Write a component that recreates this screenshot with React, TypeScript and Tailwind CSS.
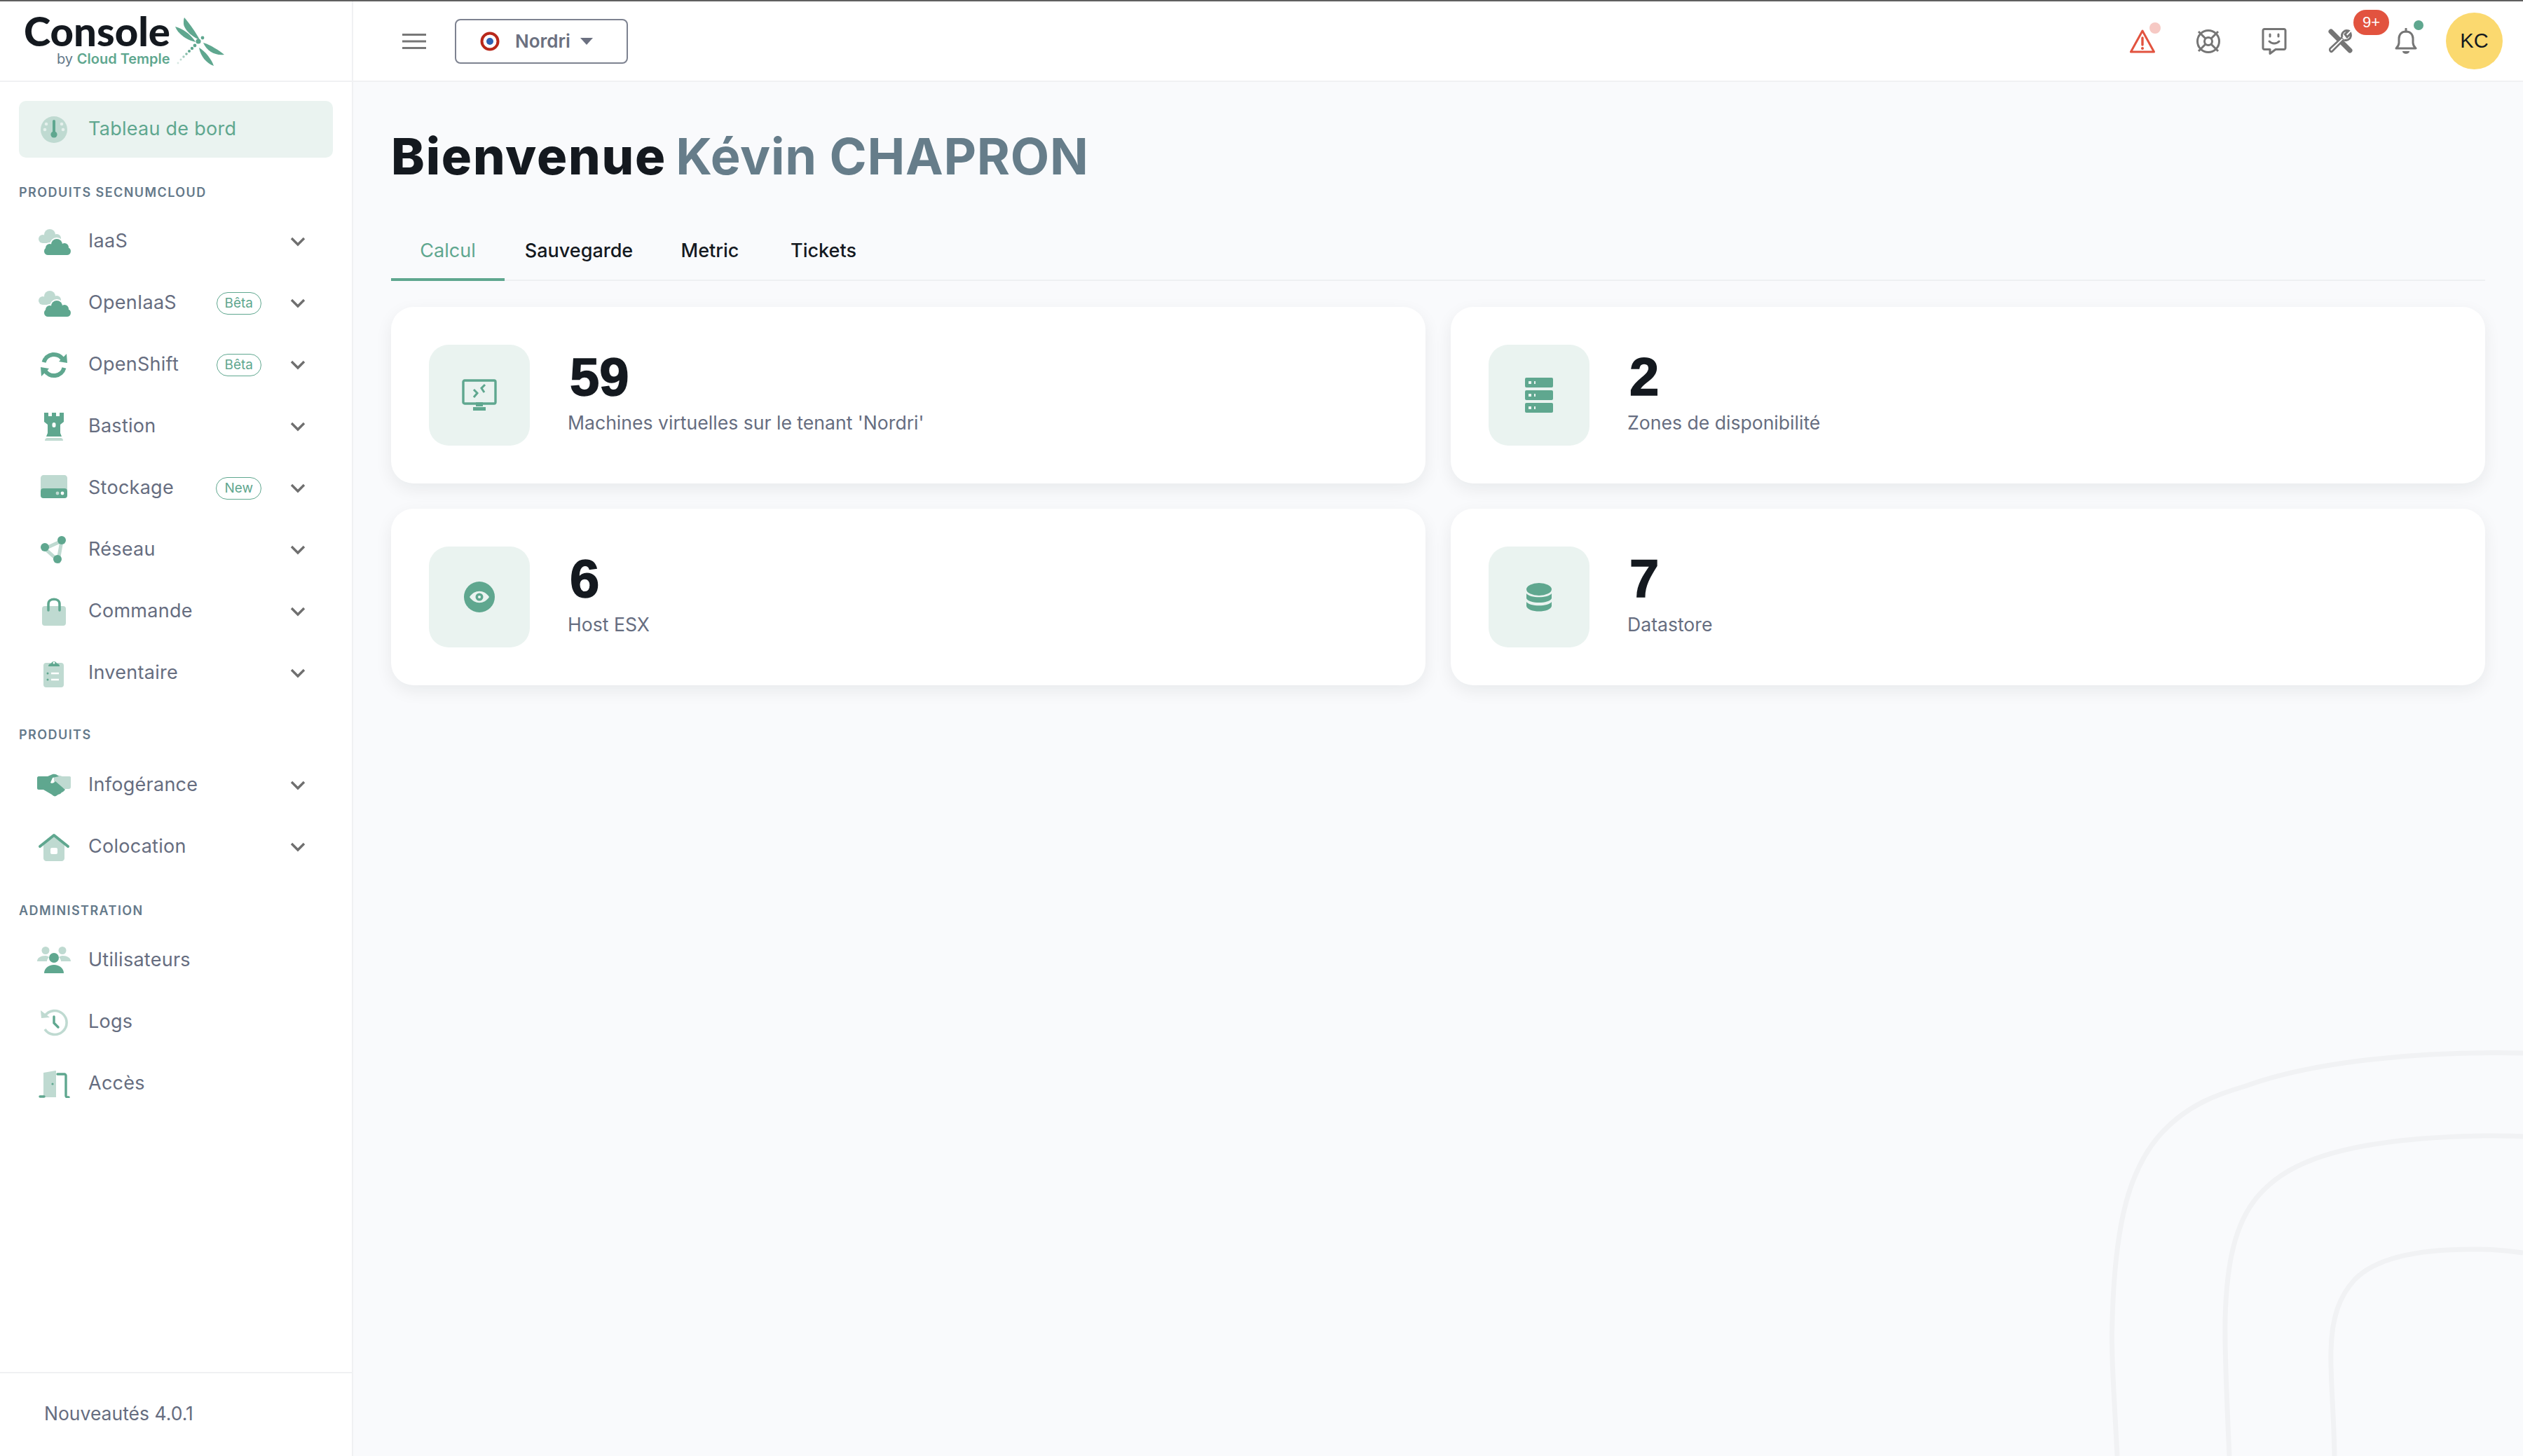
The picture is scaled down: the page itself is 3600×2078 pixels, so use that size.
import type { ReactNode } from "react";

const G = "#5fa78f";
const L = "#bfdad1";

function Chevron() {
  return (
    <svg width="24" height="16" viewBox="0 0 24 16" fill="none" className="shrink-0">
      <path d="M3 3l9 9 9-9" stroke="#6f6f6f" strokeWidth="3.4" />
    </svg>
  );
}

function Ic({ children }: { children: ReactNode }) {
  return (
    <svg width="48" height="40" viewBox="0 0 48 40" fill="none" className="shrink-0">
      {children}
    </svg>
  );
}

const Cloud = (
  <Ic>
    <circle cx="18" cy="10" r="8" fill={L} />
    <circle cx="8" cy="16" r="6" fill={L} />
    <circle cx="28" cy="15" r="6" fill={L} />
    <rect x="8" y="14" width="20" height="8" fill={L} />
    <g fill="#fff" stroke="#fff" strokeWidth="4">
      <circle cx="28" cy="24" r="8" />
      <circle cx="39" cy="28" r="6" />
      <circle cx="18" cy="29" r="6" />
      <rect x="10" y="28" width="37" height="11" rx="5.5" />
    </g>
    <g fill={G}>
      <circle cx="28" cy="24" r="8" />
      <circle cx="39" cy="28" r="6" />
      <circle cx="18" cy="29" r="6" />
      <rect x="10" y="28" width="38" height="11" rx="5.5" />
    </g>
  </Ic>
);

const icons: Record<string, ReactNode> = {
  dash: (
    <Ic>
      <circle cx="24" cy="20" r="19" fill={L} />
      <rect x="22" y="6" width="4" height="20" rx="2" fill={G} />
      <circle cx="24" cy="27" r="4.6" fill={G} />
      <circle cx="13" cy="12" r="2.3" fill="#e5f0ec" />
      <circle cx="35" cy="12" r="2.3" fill="#e5f0ec" />
      <circle cx="11" cy="20" r="2.3" fill="#e5f0ec" />
      <circle cx="37" cy="20" r="2.3" fill="#e5f0ec" />
    </Ic>
  ),
  cloud: Cloud,
  shift: (
    <Ic>
      <path d="M9.5 16A15 15 0 0 1 37 12.5" stroke={G} strokeWidth="6" />
      <path d="M38.5 24A15 15 0 0 1 11 27.5" stroke={G} strokeWidth="6" />
      <path d="M42 4l1 13-12-2zM6 36L5 23l12 2z" fill={G} />
    </Ic>
  ),
  tower: (
    <Ic>
      <path d="M10 0h6v5h5V0h6v5h5V0h6v13l-5 4v12l2 5H13l2-5V17l-5-4z" fill={G} />
      <rect x="21.5" y="14" width="5" height="7" rx="2.5" fill="#fff" />
      <path d="M11 40c0-3 2-4 3-4h20c1 0 3 1 3 4z" fill={L} />
    </Ic>
  ),
  disk: (
    <Ic>
      <path d="M5 22V5c0-2 2-4 4-4h30c2 0 4 2 4 4v17z" fill={L} />
      <rect x="5" y="20" width="38" height="14" rx="4" fill={G} />
      <circle cx="29" cy="27" r="2.4" fill={L} />
      <circle cx="36" cy="27" r="2.4" fill="#fff" />
    </Ic>
  ),
  net: (
    <Ic>
      <path d="M11 18l24-11-5 28z" stroke={L} strokeWidth="5" />
      <circle cx="11" cy="16" r="6" fill={G} />
      <circle cx="35" cy="6" r="6" fill={G} />
      <circle cx="29" cy="33" r="6" fill={G} />
    </Ic>
  ),
  bag: (
    <Ic>
      <rect x="7" y="12" width="34" height="28" rx="4" fill={L} />
      <path d="M16 18V9c0-9 16-9 16 0v9" stroke={G} strokeWidth="3.5" strokeLinecap="round" />
    </Ic>
  ),
  clip: (
    <Ic>
      <rect x="9" y="5" width="29" height="35" rx="4" fill={L} />
      <path d="M16 10c0-3 2-4 4-4 1-4 7-4 8 0 2 0 4 1 4 4z" fill={G} />
      <circle cx="24" cy="5" r="1.5" fill="#fff" />
      <path d="M20 20h11M20 29h11" stroke="#fff" strokeWidth="2.4" />
      <circle cx="15" cy="20" r="1.5" fill={G} />
      <circle cx="15" cy="29" r="1.5" fill={G} />
    </Ic>
  ),
  hands: (
    <Ic>
      <path d="M24 7c6-3 8-1 12 0h10c2 0 2 1 2 2v13c0 2-1 3-3 3h-6L24 14z" fill={L} />
      <path d="M0 9c0-1 1-2 2-2h13l7-3c3-1 6 0 9 3l-9 2-3 7c3 2 5 0 7-2l14 12-3 3-2 1-2 2-3 1-3 2c-2 1-4 0-6-2L9 26H2c-1 0-2-1-2-2z" fill={G} />
    </Ic>
  ),
  house: (
    <Ic>
      <path d="M9 14L24 5l15 9v22c0 2-2 4-4 4H13c-2 0-4-2-4-4z" fill={L} />
      <path d="M4 19L24 3l20 16" stroke={G} strokeWidth="4" strokeLinecap="round" strokeLinejoin="round" />
      <rect x="19" y="21" width="10" height="9" rx="2" fill="#fff" />
    </Ic>
  ),
  users: (
    <Ic>
      <circle cx="12" cy="5.5" r="5.5" fill={L} />
      <circle cx="36" cy="5.5" r="5.5" fill={L} />
      <path d="M0 21c0-5 5-8 12-8 2 0 4 1 5 2-2 2-3 4-3 6zM48 21c0-5-5-8-12-8-2 0-4 1-5 2 2 2 3 4 3 6z" fill={L} />
      <circle cx="24" cy="16" r="7" fill={G} />
      <path d="M10 38c0-7 6-12 14-12s14 5 14 12z" fill={G} />
    </Ic>
  ),
  logs: (
    <Ic>
      <path d="M11 11A17 17 0 1 1 11 30" stroke={L} strokeWidth="3.6" />
      <path d="M5 3l1 11 12-1z" fill={L} />
      <path d="M24 12v9l6 6" stroke={G} strokeWidth="3.4" strokeLinecap="round" />
    </Ic>
  ),
  door: (
    <Ic>
      <path d="M9 4l17-3c1 0 1 0 1 1v37H9z" fill={L} />
      <path d="M29 6h10c1 0 2 1 2 2v29c0 1 1 2 2 2h2M4 38h6" stroke={G} strokeWidth="3.4" strokeLinecap="round" />
      <circle cx="22" cy="20" r="1.6" fill={G} />
    </Ic>
  ),
};

function Tag({ label }: { label: string }) {
  return (
    <span className="flex h-[32px] items-center rounded-full border border-[#5fa78f] bg-white px-[11px] text-[19px] text-[#5fa78f]">
      {label}
    </span>
  );
}

function NavItem({ icon, label, tag, arrow = true }: { icon: string; label: string; tag?: string; arrow?: boolean }) {
  return (
    <div className="flex h-[88px] items-center pl-[53px] pr-[65px]">
      {icons[icon]}
      <span className="ml-[25px] -mt-[1px] text-[27px] tracking-[0.01em] text-[#666d80]">{label}</span>
      <span className="ml-auto flex items-center gap-[40px]">
        {tag && <Tag label={tag} />}
        {arrow && <Chevron />}
      </span>
    </div>
  );
}

function Sidebar() {
  return (
    <aside className="flex w-[504px] shrink-0 flex-col border-r-2 border-[#f0f1f3] bg-white">
      <div className="relative h-[115px] shrink-0 border-b-2 border-[#f0f1f3]">
        <div className="absolute left-[34px] top-[17px] font-['Lato'] text-[58px] font-black leading-[50px] text-[#14191f]">
          Console
        </div>
        <div className="absolute left-[81px] top-[71px] text-[20px] leading-[22px] text-[#64798a]">
          by <span className="font-semibold text-[#5fa78f]">Cloud Temple</span>
        </div>
        <svg className="absolute left-[248px] top-[21px]" width="74" height="74" viewBox="0 0 74 74" fill="none">
          <path d="M15 2C22 10 32 24 37 34C27 30 15 20 14 11C14 7 14 4 15 2z" fill={G} />
          <path d="M2 15C14 18 26 28 31 37C20 35 7 27 2 15z" fill={G} />
          <path d="M42 38C52 41 65 49 72 55C60 57 47 50 42 38z" fill={G} />
          <path d="M36 45C45 50 54 62 57 71C47 68 38 57 36 45z" fill={G} />
          <circle cx="41" cy="31" r="2.4" fill={G} />
          <circle cx="35" cy="36" r="3.6" fill={G} />
          <circle cx="30" cy="42" r="2.4" fill={G} />
          <circle cx="26" cy="46" r="2.2" fill={G} />
          <circle cx="22" cy="50" r="2" fill={G} />
          <circle cx="18" cy="54" r="1.8" fill="#85bca9" />
          <circle cx="14" cy="58" r="1.7" fill="#a2cdbf" />
          <circle cx="10" cy="62" r="1.5" fill={L} />
          <circle cx="6" cy="67" r="1.4" fill="#d7e8e2" />
        </svg>
      </div>

      <div className="mx-[27px] mt-[27px] flex h-[81px] items-center rounded-[10px] bg-[#eaf3f0] pl-[26px]">
        {icons.dash}
        <span className="ml-[25px] -mt-[1px] text-[27px] tracking-[0.01em] text-[#5fa78f]">Tableau de bord</span>
      </div>

      <SectionLabel className="mb-[16px] mt-[40px]">Produits SecNumCloud</SectionLabel>
      <NavItem icon="cloud" label="IaaS" />
      <NavItem icon="cloud" label="OpenIaaS" tag="Bêta" />
      <NavItem icon="shift" label="OpenShift" tag="Bêta" />
      <NavItem icon="tower" label="Bastion" />
      <NavItem icon="disk" label="Stockage" tag="New" />
      <NavItem icon="net" label="Réseau" />
      <NavItem icon="bag" label="Commande" />
      <NavItem icon="clip" label="Inventaire" />

      <SectionLabel className="mb-[18px] mt-[34px]">Produits</SectionLabel>
      <NavItem icon="hands" label="Infogérance" />
      <NavItem icon="house" label="Colocation" />

      <SectionLabel className="mb-[17px] mt-[37px]">Administration</SectionLabel>
      <NavItem icon="users" label="Utilisateurs" arrow={false} />
      <NavItem icon="logs" label="Logs" arrow={false} />
      <NavItem icon="door" label="Accès" arrow={false} />

      <div className="mt-auto flex h-[120px] items-center border-t-2 border-[#f0f1f3] pb-[2px] pl-[63px] text-[26.5px] text-[#666d80]">
        Nouveautés 4.0.1
      </div>
    </aside>
  );
}

function SectionLabel({ children, className }: { children: ReactNode; className: string }) {
  return (
    <div className={"pl-[27px] text-[18px] font-semibold uppercase leading-[20px] tracking-[0.08em] text-[#64798a] " + className}>
      {children}
    </div>
  );
}

function TopIcon({ children, className = "" }: { children: ReactNode; className?: string }) {
  return (
    <div className={"relative flex h-[40px] w-[40px] items-center justify-center " + className}>
      {children}
    </div>
  );
}

function Header() {
  const gray = "#757575";
  return (
    <header className="flex h-[115px] shrink-0 items-center border-b-2 border-[#f0f1f3] bg-white pl-[70px] pr-[29px]">
      <svg width="34" height="24" viewBox="0 0 34 24" fill="none">
        <path d="M0 2.5h34M0 12h34M0 21.5h34" stroke="#777" strokeWidth="3.2" />
      </svg>
      <button className="ml-[41px] flex h-[64px] w-[247px] items-center rounded-[8px] border-2 border-[#7d8290] bg-white pl-[34px] text-[26px] font-semibold text-[#6b7080]">
        <svg width="28" height="28" viewBox="0 0 28 28">
          <circle cx="14" cy="14" r="11.5" fill="#fff" stroke="#b8281a" strokeWidth="4" />
          <circle cx="14" cy="14" r="5" fill="#2e62b4" />
        </svg>
        <span className="ml-[22px]">Nordri</span>
        <svg className="ml-[14px]" width="18" height="10" viewBox="0 0 18 10">
          <path d="M0 0h18l-9 10z" fill="#6b7080" />
        </svg>
      </button>

      <div className="ml-auto flex items-center gap-[54px]">
        <TopIcon>
          <svg width="38" height="36" viewBox="0 0 38 36" fill="none">
            <path d="M19 3L2.5 33h33z" stroke="#e2533f" strokeWidth="3" strokeLinejoin="round" />
            <path d="M19 13v10" stroke="#e2533f" strokeWidth="3.4" strokeLinecap="round" />
            <circle cx="19" cy="28" r="2" fill="#e2533f" />
          </svg>
          <span className="absolute left-[30px] top-[-7px] h-[16px] w-[16px] rounded-full bg-[#f6c9c4]" />
        </TopIcon>
        <TopIcon>
          <svg width="36" height="36" viewBox="0 0 36 36" fill="none" stroke={gray} strokeWidth="3">
            <circle cx="18" cy="18" r="15.5" />
            <circle cx="18" cy="18" r="5.5" />
            <path d="M4 4l10 10M32 4L22 14M4 32l10-10M32 32L22 22" />
          </svg>
        </TopIcon>
        <TopIcon>
          <svg width="36" height="40" viewBox="0 0 36 40" fill="none" stroke={gray} strokeWidth="3">
            <path d="M4 2.5h28c1 0 2 1 2 2v25c0 1-1 2-2 2H20l-8 6v-6H4c-1 0-2-1-2-2v-25c0-1 1-2 2-2z" strokeLinejoin="round" />
            <path d="M11 20c4 4 10 4 14 0" strokeLinecap="round" />
            <path d="M12 10v3M24 10v3" strokeLinecap="round" />
          </svg>
        </TopIcon>
        <TopIcon>
          <svg width="38" height="38" viewBox="0 0 38 38" fill="none">
            <path d="M6 5l27 27" stroke={gray} strokeWidth="7" strokeLinecap="round" />
            <path d="M5 33c-1-1-1-3 0-4l17-16 3 3L8 33c-1 1-2 1-3 0z" stroke={gray} strokeWidth="2.6" fill="#fff" />
            <path d="M22 13c-2-6 4-11 9-9l-5 5 3 4 5-5c2 6-4 11-9 9" stroke={gray} strokeWidth="3" fill="#fff" />
          </svg>
          <span className="absolute left-[39px] top-[-25px] flex h-[36px] w-[51px] items-center justify-center rounded-full bg-[#e2533f] font-['Liberation_Sans'] text-[22px] text-white">
            9+
          </span>
        </TopIcon>
        <TopIcon>
          <svg width="32" height="38" viewBox="0 0 32 38" fill="none">
            <path d="M2 29c3-3 4-5 4-8v-6C6 9 10 5 16 5s10 4 10 10v6c0 3 1 5 4 8z" stroke={gray} strokeWidth="3" strokeLinejoin="round" />
            <path d="M16 1v4" stroke={gray} strokeWidth="3" strokeLinecap="round" />
            <path d="M11 33h10c0 5-10 5-10 0z" fill={gray} />
          </svg>
          <span className="absolute left-[31px] top-[-10px] h-[14px] w-[14px] rounded-full bg-[#5fa78f]" />
        </TopIcon>
      </div>
      <div className="ml-[37px] flex h-[81px] w-[81px] items-center justify-center rounded-full bg-[#fbd96f] font-['Liberation_Sans'] text-[29px] text-[#14191f]">
        KC
      </div>
    </header>
  );
}

function Stat({ value, label, icon }: { value: string; label: string; icon: ReactNode }) {
  return (
    <div className="flex h-[252px] items-center rounded-[32px] bg-white pl-[54px] shadow-[0_8px_24px_rgba(20,25,31,0.07)]">
      <div className="flex h-[144px] w-[144px] shrink-0 items-center justify-center rounded-[28px] bg-[#eaf3f0]">
        {icon}
      </div>
      <div className="ml-[54px] pb-[10px]">
        <div className="ml-[3px] font-['Liberation_Sans'] text-[76px] font-bold leading-[80px] text-[#14191f] [-webkit-text-stroke:1.5px_#14191f]">
          {value}
        </div>
        <div className="mt-[8px] text-[26.6px] leading-[34px] text-[#666d80]">{label}</div>
      </div>
    </div>
  );
}

function Tabs() {
  const tabs = [
    { label: "Calcul", w: "w-[162px]", active: true },
    { label: "Sauvegarde", w: "w-[212px]" },
    { label: "Metric", w: "w-[162px]" },
    { label: "Tickets", w: "w-[162px]" },
  ];
  return (
    <div className="mt-[54px] flex h-[80px] border-b-2 border-[#eef0f2]">
      {tabs.map((t) => (
        <div
          key={t.label}
          className={
            "-mb-[2px] flex items-center justify-center border-b-4 pb-[2px] text-[27px] " +
            t.w +
            (t.active ? " border-[#5fa78f] text-[#5fa78f]" : " border-transparent font-medium text-[#14191f]")
          }
        >
          {t.label}
        </div>
      ))}
    </div>
  );
}

export default function App() {
  return (
    <div className="flex h-screen overflow-hidden border-t-2 border-[#5f5f5f] bg-[#f9fafc] font-['Inter',sans-serif]">
      <Sidebar />
      <div className="relative flex min-w-0 flex-1 flex-col">
        <Header />
        <svg className="absolute bottom-0 right-0" width="600" height="600" viewBox="3000 1478 600 600" fill="none" stroke="#f1f2f4" strokeWidth="7">
          <path d="M3021 2078C3016 1980 3012 1930 3014 1883C3018 1740 3040 1670 3079 1623C3120 1575 3170 1560 3204 1550C3300 1515 3450 1500 3600 1503" />
          <path d="M3181 2078C3177 1990 3174 1930 3175 1883C3177 1800 3190 1745 3221 1708C3255 1668 3320 1625 3543 1621C3560 1621 3580 1621 3600 1622" />
          <path d="M3331 2078C3330 2010 3325 1970 3326 1928C3327 1880 3338 1850 3360 1826C3395 1790 3470 1782 3538 1783C3560 1783 3580 1785 3600 1788" />
        </svg>
        <main className="relative px-[54px] pt-[62px]">
          <h1 className="text-[72px] font-bold leading-[88px] text-[#14191f]">
            <span className="font-extrabold tracking-[1.8px]">Bienvenue</span>{" "}
            <span className="-ml-[4px] tracking-[0.7px] text-[#667d8a]">Kévin CHAPRON</span>
          </h1>
          <Tabs />
          <div className="mt-[37px] grid grid-cols-2 gap-[36px]">
            <Stat
              value="59"
              label="Machines virtuelles sur le tenant 'Nordri'"
              icon={
                <svg width="50" height="46" viewBox="0 0 50 46" fill="none">
                  <rect x="2" y="2" width="46" height="33" rx="2" stroke={G} strokeWidth="3.4" />
                  <path d="M20 33h10v6H20zM16 40h18v5H16z" fill={G} />
                  <path d="M17 15l5 5-5 6M33 8l-5 5 4 6" stroke={G} strokeWidth="3" />
                </svg>
              }
            />
            <Stat
              value="2"
              label="Zones de disponibilité"
              icon={
                <svg width="40" height="50" viewBox="0 0 40 50">
                  {[0, 18, 36].map((y) => (
                    <g key={y}>
                      <rect y={y} width="40" height="14" rx="2" fill={G} />
                      <rect x="5" y={y + 5} width="4" height="4" fill="#eaf3f0" />
                      <rect x="13" y={y + 5} width="2" height="4" fill="#eaf3f0" />
                    </g>
                  ))}
                </svg>
              }
            />
            <Stat
              value="6"
              label="Host ESX"
              icon={
                <svg width="44" height="44" viewBox="0 0 44 44">
                  <circle cx="22" cy="22" r="22" fill={G} />
                  <path d="M8 22c7-11 21-11 28 0-7 11-21 11-28 0z" fill="#eaf3f0" />
                  <circle cx="22" cy="22" r="5.5" fill={G} />
                  <circle cx="22" cy="22" r="2" fill="#eaf3f0" />
                </svg>
              }
            />
            <Stat
              value="7"
              label="Datastore"
              icon={
                <svg width="36" height="41" viewBox="0 0 36 41">
                  <ellipse cx="18" cy="9" rx="18" ry="9" fill={G} />
                  <path d="M0 15c5 7 31 7 36 0v7c-4 8-32 8-36 0zM0 27c5 7 31 7 36 0v6c-2 10-34 10-36 0z" fill={G} />
                </svg>
              }
            />
          </div>
        </main>
      </div>
    </div>
  );
}
